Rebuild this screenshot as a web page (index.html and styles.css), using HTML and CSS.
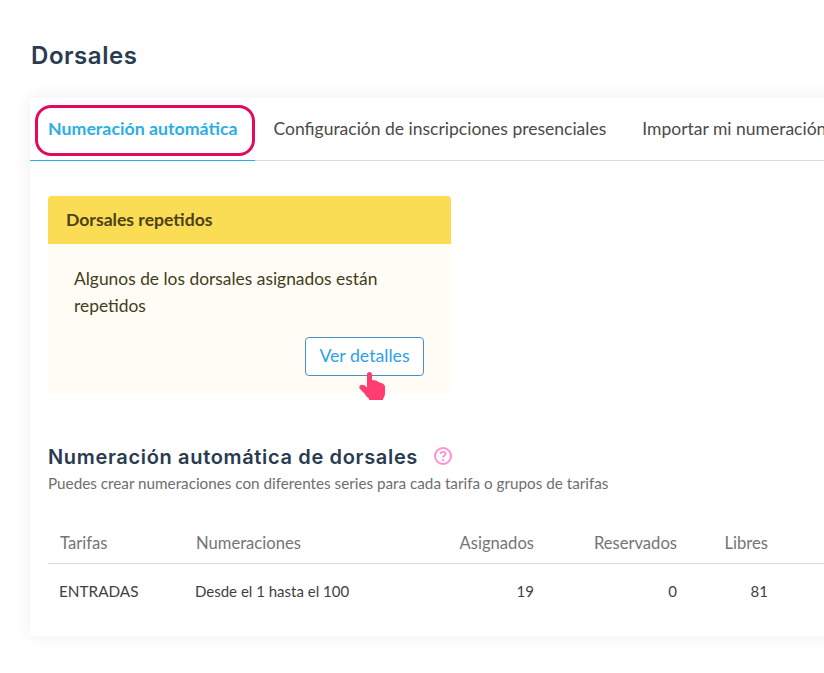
FILE: index.html
```html
<!DOCTYPE html>
<html lang="es">
<head>
  <meta charset="UTF-8">
  <title>Dorsales</title>
  <link rel="stylesheet" href="styles.css">
</head>
<body>
  <h1 class="page-title">Dorsales</h1>

  <div class="card">
    <!-- pestañas -->
    <nav class="tabs">
      <a class="tab active">Numeración automática</a>
      <a class="tab">Configuración de inscripciones presenciales</a>
      <a class="tab">Importar mi numeración</a>
      <span class="tab-mark"></span>
    </nav>

    <div class="card-body">
      <!-- aviso -->
      <div class="alert">
        <div class="alert-head">Dorsales repetidos</div>
        <div class="alert-body">
          <p>Algunos de los dorsales asignados están repetidos</p>
          <div class="alert-actions">
            <button class="btn">Ver detalles</button>
            <svg class="hand" viewBox="0 0 28 30" width="28" height="30">
              <path fill="#ff3d71" d="M11.500 0C13 0 14 1 14 2.500V8L18 8.500C19 9 20 10 23 11C25.500 11.500 27 13 27 15V21C27 24 26 25.500 25 27V28H11V26.500C9 25.500 7.500 23 6 21L1.500 16.500C1 15 1.500 13.500 3 13C4.500 12.500 6.500 13 9 15.500V2.500C9 1 10 0 11.500 0Z"/>
            </svg>
          </div>
        </div>
      </div>

      <!-- numeración -->
      <div class="section-head">
        <h2>Numeración automática de dorsales</h2>
        <svg class="help" viewBox="0 0 18 18" width="18" height="18">
          <circle cx="9" cy="9" r="8" fill="none" stroke="#ff8fd0" stroke-width="2"/>
          <path d="M6.500 7.100c0-1.400 1.100-2.300 2.500-2.300s2.500.800 2.500 2.100c0 1.800-2.500 1.900-2.500 3.700" fill="none" stroke="#ff8fd0" stroke-width="1.800"/>
          <circle cx="9" cy="13.200" r="1.100" fill="#ff8fd0"/>
        </svg>
      </div>
      <p class="section-sub">Puedes crear numeraciones con diferentes series para cada tarifa o grupos de tarifas</p>

      <div class="table">
        <div class="row row-head">
          <span>Tarifas</span>
          <span>Numeraciones</span>
          <span class="num">Asignados</span>
          <span class="num">Reservados</span>
          <span class="num">Libres</span>
        </div>
        <div class="row">
          <span>ENTRADAS</span>
          <span class="row-range">Desde el 1 hasta el 100</span>
          <span class="num">19</span>
          <span class="num">0</span>
          <span class="num">81</span>
        </div>
      </div>
    </div>
  </div>
</body>
</html>
```

FILE: styles.css
```css
* {
  box-sizing: border-box;
}
html, body {
  height: 673px;
  overflow: hidden;
}
body {
  margin: 0;
  padding: 41px 0 0 30px;
  background: #fff;
  color: #3f3f3f;
  font-family: 'Lato', sans-serif;
}

.page-title {
  margin: 0 0 28px 1px;
  font-family: 'Inter', sans-serif;
  font-size: 24px;
  line-height: 29px;
  font-weight: 600;
  letter-spacing: 0.55px;
  color: #2a3b50;
}

.card {
  width: 840px;
  height: 538px;
  background: #fff;
  box-shadow: 0 0 18px rgba(0,0,0,0.07);
}

/* pestañas */
.tabs {
  position: relative;
  display: flex;
  height: 63px;
  border-bottom: 1px solid #dcdcdc;
}
.tab {
  flex: none;
  padding: 0 18px;
  font-size: 17.5px;
  line-height: 61px;
  color: #4a4a4a;
  white-space: nowrap;
}
.tab.active {
  margin-bottom: -1px;
  height: 63px;
  font-size: 17.75px;
  font-weight: 700;
  color: #2baee6;
  border-bottom: 1px solid #2baee6;
}
.tab-mark {
  position: absolute;
  left: 5px;
  top: 7px;
  width: 220px;
  height: 51px;
  border: 3px solid #e2095f;
  border-radius: 16px;
}

.card-body {
  padding: 35px 0 0 18px;
}

/* aviso */
.alert {
  width: 403px;
  height: 197px;
  background: #fffcf5;
  border-radius: 4px 4px 0 0;
}
.alert-head {
  height: 48px;
  padding-left: 18px;
  background: #fbdc55;
  border-radius: 4px 4px 0 0;
  font-size: 17.6px;
  font-weight: 700;
  line-height: 48px;
  color: #4a421c;
}
.alert-body {
  padding: 21px 27px 0 26px;
}
.alert-body p {
  margin: 0;
  font-size: 17.4px;
  line-height: 27px;
  color: #443d1c;
}
.alert-actions {
  position: relative;
  display: flex;
  justify-content: flex-end;
  margin-top: 18px;
}
.btn {
  width: 119px;
  height: 39px;
  padding: 0 0 2px;
  background: #fff;
  border: 1px solid #4a90c8;
  border-radius: 4px;
  font-family: inherit;
  font-size: 17.7px;
  color: #2f9fe8;
}
.hand {
  position: absolute;
  left: 284px;
  top: 35px;
}

/* numeración */
.section-head {
  display: flex;
  align-items: center;
  gap: 16px;
  margin-top: 50px;
}
.section-head h2 {
  margin: 0;
  padding-top: 2px;
  font-family: 'Inter', sans-serif;
  font-size: 20px;
  line-height: 24px;
  font-weight: 600;
  letter-spacing: 0.66px;
  color: #2a3b50;
}
.section-sub {
  margin: 4px 0 0;
  font-size: 15.25px;
  line-height: 20px;
  color: #6e6e6e;
}

.table {
  margin-top: 29px;
}
.row {
  display: grid;
  grid-template-columns: 136px 240px 98px 143px 91px 1fr;
  align-items: center;
  height: 54px;
  padding-left: 12px;
  font-size: 15px;
  color: #3f3f3f;
}
.row-head {
  height: 42px;
  padding-bottom: 0;
  font-size: 16.6px;
  color: #757575;
  border-bottom: 1px solid #dcdcdc;
}
.row span:first-child {
  margin-left: -1px;
  font-size: 15.3px;
}
.row-head span:first-child {
  margin-left: 0;
  font-size: 16.6px;
}
.row-range {
  margin-left: -1px;
}
.num {
  text-align: right;
}
```
